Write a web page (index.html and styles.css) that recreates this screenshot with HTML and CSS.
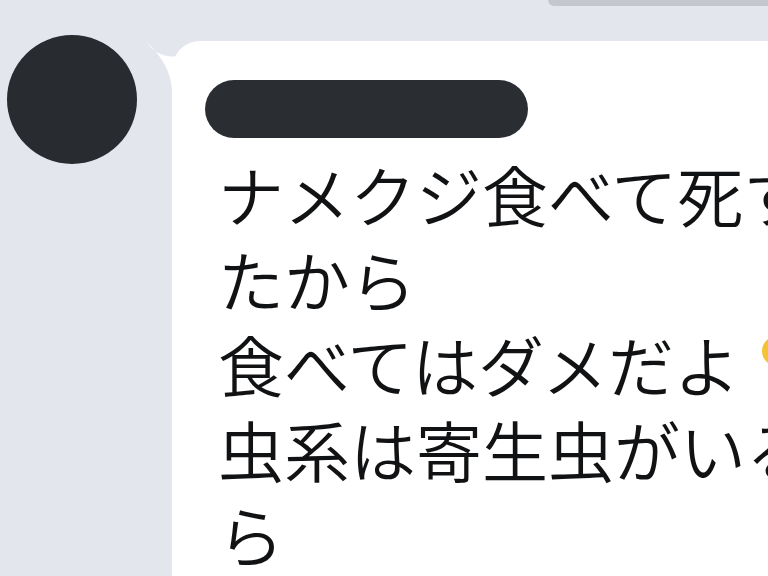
FILE: index.html
```html
<!DOCTYPE html>
<html lang="ja">
<head>
<meta charset="utf-8">
<link rel="stylesheet" href="styles.css">
</head>
<body>
<div class="prev-bubble"></div>
<div class="row">
  <div class="avatar"></div>
  <div class="bubble">
    <svg class="tail" width="76" height="70" viewBox="0 0 76 70">
      <path d="M7 7 C16 21 32 26 48 17 C58 11 66 7 76 6 L76 44 L60 44 L60 70 L32 70 L32 55 C31 35 20 20 7 7 Z" fill="#ffffff"/>
    </svg>
    <div class="name"></div>
    <div class="text">
      <div class="line">ナメクジ食べて死すことも</div>
      <div class="line">たから</div>
      <div class="line">食べてはダメだよ<span class="emoji"></span></div>
      <div class="line">虫系は寄生虫がいるか</div>
      <div class="line">ら</div>
    </div>
  </div>
</div>
</body>
</html>
```

FILE: styles.css
```css
html, body {
  margin: 0;
  padding: 0;
  overflow: hidden;
  width: 768px;
  height: 576px;
  background: #e4e6ed;
}
.prev-bubble {
  margin-left: 548px;
  width: 260px;
  height: 6px;
  background: #c4c7cf;
  border-bottom-left-radius: 14px;
}
.row {
  display: flex;
  align-items: flex-start;
}
.avatar {
  flex-shrink: 0;
  width: 130px;
  height: 129px;
  margin: 29px 0 0 7px;
  border-radius: 50%;
  background: #282c31;
}
.bubble {
  position: relative;
  flex-shrink: 0;
  width: 760px;
  height: 700px;
  margin: 35px 0 0 35px;
  padding: 39px 0 0 33px;
  box-sizing: border-box;
  background: #ffffff;
  border-radius: 28px;
}
.tail {
  position: absolute;
  left: -32px;
  top: -6px;
}
.name {
  position: relative;
  width: 323px;
  height: 58px;
  border-radius: 29px;
  background: #2a2e33;
}
.text {
  margin: 13px 0 0 13px;
  font-family: "Noto Sans CJK JP", sans-serif;
  font-weight: 350;
  font-size: 66px;
  line-height: 85px;
  color: #111214;
  white-space: nowrap;
}
.emoji {
  display: inline-block;
  width: 30px;
  height: 30px;
  margin-left: 22px;
  vertical-align: 26px;
  border-radius: 50%;
  background: #f5c233;
}
```
